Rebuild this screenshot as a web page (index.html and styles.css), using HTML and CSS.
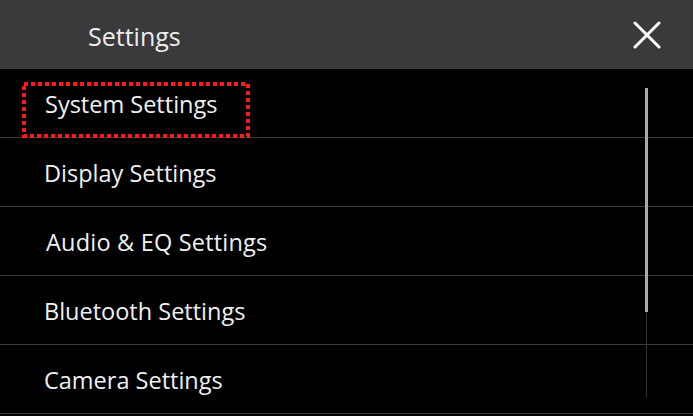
FILE: index.html
```html
<!DOCTYPE html>
<html lang="en">
<head>
  <meta charset="UTF-8">
  <title>Settings</title>
  <link rel="stylesheet" href="styles.css">
</head>
<body>

<div class="screen">
  <div class="header">
    <span class="title">Settings</span>
    <button class="close" aria-label="Close">
      <svg width="28" height="28" viewBox="0 0 28 28">
        <path d="M2 2 L26 26 M26 2 L2 26" stroke="#fff" stroke-width="3" stroke-linecap="round"/>
      </svg>
    </button>
  </div>

  <div class="list">
    <div class="row selected">
      System Settings
      <svg class="focus" width="228" height="56" viewBox="0 0 228 56">
        <rect x="2" y="2" width="224" height="52" fill="none" stroke="#ff1a1a" stroke-width="4" stroke-dasharray="4 3"/>
      </svg>
    </div>
    <div class="row">Display Settings</div>
    <div class="row audio">Audio &amp; EQ Settings</div>
    <div class="row">Bluetooth Settings</div>
    <div class="row">Camera Settings</div>

    <div class="scrollbar">
      <div class="thumb"></div>
    </div>
  </div>
</div>

</body>
</html>
```

FILE: styles.css
```css
body {
  margin: 0;
  padding: 0;
  background: #000;
  font-family: 'Open Sans', 'DejaVu Sans', sans-serif;
}
.screen {
  width: 693px;
  height: 416px;
  background: #000;
  overflow: hidden;
}
.header {
  height: 69px;
  background: #3a3a3d;
  display: flex;
  align-items: center;
  justify-content: space-between;
  padding: 0 32px 0 88px;
}
.title {
  color: #ececec;
  font-size: 25px;
  padding-top: 3px;
}
.close {
  background: none;
  border: none;
  padding: 0;
  width: 28px;
  height: 28px;
  cursor: pointer;
}
.list {
  position: relative;
}
.row {
  position: relative;
  height: 69px;
  display: flex;
  align-items: center;
  padding-left: 44px;
  padding-top: 2px;
  color: #f0f0f0;
  font-size: 23.5px;
  border-bottom: 1px solid #3b3b3b;
  box-sizing: border-box;
}
.row:last-of-type {
  border-bottom: none;
}
.row.selected {
  padding-left: 45px;
}
.row.audio {
  padding-left: 46px;
  letter-spacing: 0.2px;
}
.focus {
  position: absolute;
  left: 22px;
  top: 13px;
}
.scrollbar {
  position: absolute;
  left: 645px;
  top: 19px;
  width: 3px;
  height: 310px;
  display: flex;
  justify-content: center;
}
.scrollbar::before {
  content: "";
  position: absolute;
  left: 1px;
  top: 0;
  width: 1px;
  height: 100%;
  background: #333;
}
.thumb {
  position: relative;
  width: 3px;
  height: 224px;
  background: #a9a9a9;
}
```
